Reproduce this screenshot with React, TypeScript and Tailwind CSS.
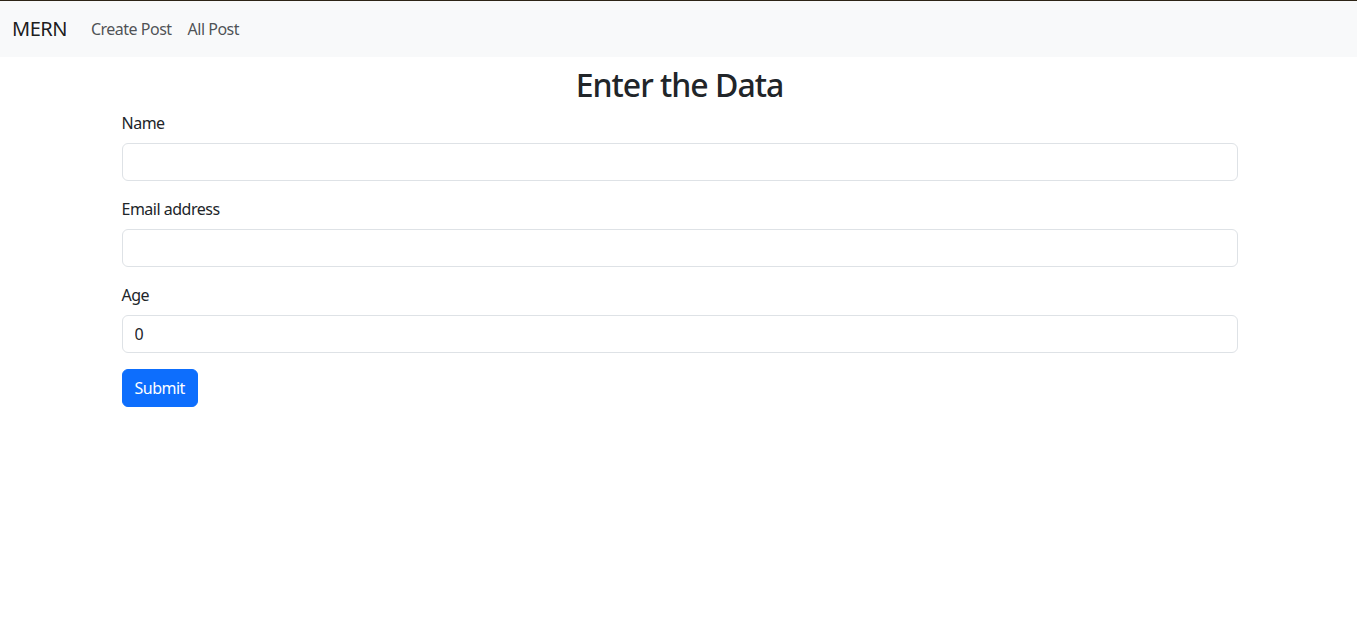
import React from "react";

function Field({ label, type = "text", defaultValue }: { label: string; type?: string; defaultValue?: string }) {
  return (
    <div className="mb-4">
      <label className="mb-2 block leading-6 tracking-[-0.5px]">{label}</label>
      <input
        type={type}
        defaultValue={defaultValue}
        className="block h-[38px] w-full rounded-md border border-[#dee2e6] bg-white px-3 text-base text-[#212529] outline-none"
      />
    </div>
  );
}

export default function App() {
  return (
    <div className="min-h-screen bg-white text-[#212529]" style={{ fontFamily: '"Noto Sans", "Open Sans", sans-serif' }}>
      <nav className="flex h-[57px] items-center border-t border-[#2d2416] bg-[#f8f9fa] px-3">
        <a className="mr-4 text-xl leading-[30px] tracking-[-0.5px] text-black/90">MERN</a>
        <div className="flex tracking-[-0.5px]">
          <a className="px-2 text-[#212529]/80">Create Post</a>
          <a className="px-2 text-[#212529]/80">All Post</a>
        </div>
      </nav>
      <div className="mx-auto w-[1140px] pl-[13px] pr-[11px]">
        <h2 className="mb-[6px] mt-[8px] text-center text-[32px] font-medium leading-[40px] tracking-[-1px]">
          Enter the Data
        </h2>
        <form>
          <Field label="Name" />
          <Field label="Email address" type="email" />
          <Field label="Age" type="number" defaultValue="0" />
          <button
            type="button"
            className="rounded-md border border-[#0d6efd] bg-[#0d6efd] px-3 py-1.5 leading-6 tracking-[-0.5px] text-white"
          >
            Submit
          </button>
        </form>
      </div>
    </div>
  );
}
